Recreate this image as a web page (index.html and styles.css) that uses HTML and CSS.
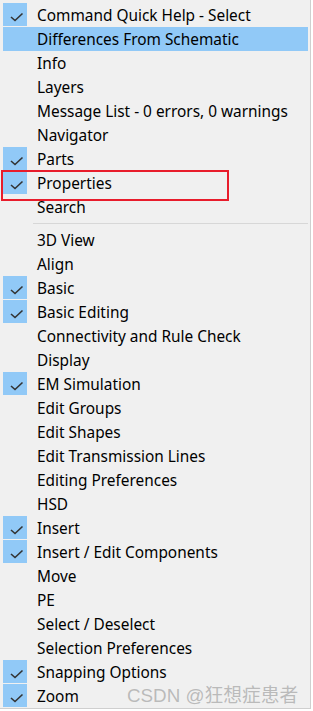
FILE: index.html
```html
<!DOCTYPE html>
<html lang="en">
<head>
    <meta charset="UTF-8">
    <title>Toolbars Menu</title>
    <link rel="stylesheet" href="styles.css">
</head>
<body>

<div class="menu">
    <div class="item checked"><span class="check"><svg viewBox="0 0 24 22"><path d="M8 14 L12 17.5 L19.5 10.5"/></svg></span><span class="label">Command Quick Help - Select</span></div>
    <div class="item hover"><span class="check"></span><span class="label">Differences From Schematic</span></div>
    <div class="item"><span class="check"></span><span class="label">Info</span></div>
    <div class="item"><span class="check"></span><span class="label">Layers</span></div>
    <div class="item"><span class="check"></span><span class="label">Message List - 0 errors, 0 warnings</span></div>
    <div class="item"><span class="check"></span><span class="label">Navigator</span></div>
    <div class="item checked"><span class="check"><svg viewBox="0 0 24 22"><path d="M8 14 L12 17.5 L19.5 10.5"/></svg></span><span class="label">Parts</span></div>
    <div class="item checked marked"><span class="check"><svg viewBox="0 0 24 22"><path d="M8 14 L12 17.5 L19.5 10.5"/></svg></span><span class="label">Properties</span></div>
    <div class="item"><span class="check"></span><span class="label">Search</span></div>

    <div class="separator"></div>

    <div class="item"><span class="check"></span><span class="label">3D View</span></div>
    <div class="item"><span class="check"></span><span class="label">Align</span></div>
    <div class="item checked"><span class="check"><svg viewBox="0 0 24 22"><path d="M8 14 L12 17.5 L19.5 10.5"/></svg></span><span class="label">Basic</span></div>
    <div class="item checked"><span class="check"><svg viewBox="0 0 24 22"><path d="M8 14 L12 17.5 L19.5 10.5"/></svg></span><span class="label">Basic Editing</span></div>
    <div class="item"><span class="check"></span><span class="label">Connectivity and Rule Check</span></div>
    <div class="item"><span class="check"></span><span class="label">Display</span></div>
    <div class="item checked"><span class="check"><svg viewBox="0 0 24 22"><path d="M8 14 L12 17.5 L19.5 10.5"/></svg></span><span class="label">EM Simulation</span></div>
    <div class="item"><span class="check"></span><span class="label">Edit Groups</span></div>
    <div class="item"><span class="check"></span><span class="label">Edit Shapes</span></div>
    <div class="item"><span class="check"></span><span class="label">Edit Transmission Lines</span></div>
    <div class="item"><span class="check"></span><span class="label">Editing Preferences</span></div>
    <div class="item"><span class="check"></span><span class="label">HSD</span></div>
    <div class="item checked"><span class="check"><svg viewBox="0 0 24 22"><path d="M8 14 L12 17.5 L19.5 10.5"/></svg></span><span class="label">Insert</span></div>
    <div class="item checked"><span class="check"><svg viewBox="0 0 24 22"><path d="M8 14 L12 17.5 L19.5 10.5"/></svg></span><span class="label">Insert / Edit Components</span></div>
    <div class="item"><span class="check"></span><span class="label">Move</span></div>
    <div class="item"><span class="check"></span><span class="label">PE</span></div>
    <div class="item"><span class="check"></span><span class="label">Select / Deselect</span></div>
    <div class="item"><span class="check"></span><span class="label">Selection Preferences</span></div>
    <div class="item checked"><span class="check"><svg viewBox="0 0 24 22"><path d="M8 14 L12 17.5 L19.5 10.5"/></svg></span><span class="label">Snapping Options</span></div>
    <div class="item checked"><span class="check"><svg viewBox="0 0 24 22"><path d="M8 14 L12 17.5 L19.5 10.5"/></svg></span><span class="label">Zoom</span></div>

    <div class="watermark">CSDN @狂想症患者</div>
</div>

</body>
</html>
```

FILE: styles.css
```css
body {
    margin: 0;
    background: white;
    font-family: "Noto Sans", "Open Sans", sans-serif;
}
.menu {
    position: relative;
    width: 311px;
    height: 709px;
    box-sizing: border-box;
    padding: 3px 2px 0 3px;
    background: #f0f0f0;
    border-right: 1px solid #cfcfcf;
    border-bottom: 1px solid #cfcfcf;
}
.item {
    display: flex;
    align-items: center;
    height: 24px;
    font-size: 15.4px;
    color: #000;
}
.item.hover {
    background: #91c9f7;
}
.check {
    width: 24px;
    height: 23px;
    align-self: flex-start;
    flex-shrink: 0;
}
.item.checked .check {
    background: #91c9f7;
}
.check svg {
    width: 24px;
    height: 22px;
    display: block;
}
.check svg path {
    fill: none;
    stroke: #333;
    stroke-width: 1.6;
}
.label {
    padding-left: 10px;
    white-space: nowrap;
}
.item.marked {
    position: relative;
}
.item.marked::after {
    content: "";
    position: absolute;
    left: -2px;
    top: -1px;
    width: 224px;
    height: 27px;
    border: 2px solid #e81c2b;
}
.separator {
    height: 9px;
    display: flex;
    align-items: center;
    padding-left: 30px;
}
.separator::before {
    content: "";
    flex: 1;
    height: 1px;
    background: #d7d7d7;
}
.watermark {
    position: absolute;
    left: 127px;
    top: 680px;
    font-family: "Liberation Sans", "Noto Sans CJK SC", sans-serif;
    font-size: 18.8px;
    color: rgba(150, 150, 150, 0.6);
    white-space: nowrap;
}
```
